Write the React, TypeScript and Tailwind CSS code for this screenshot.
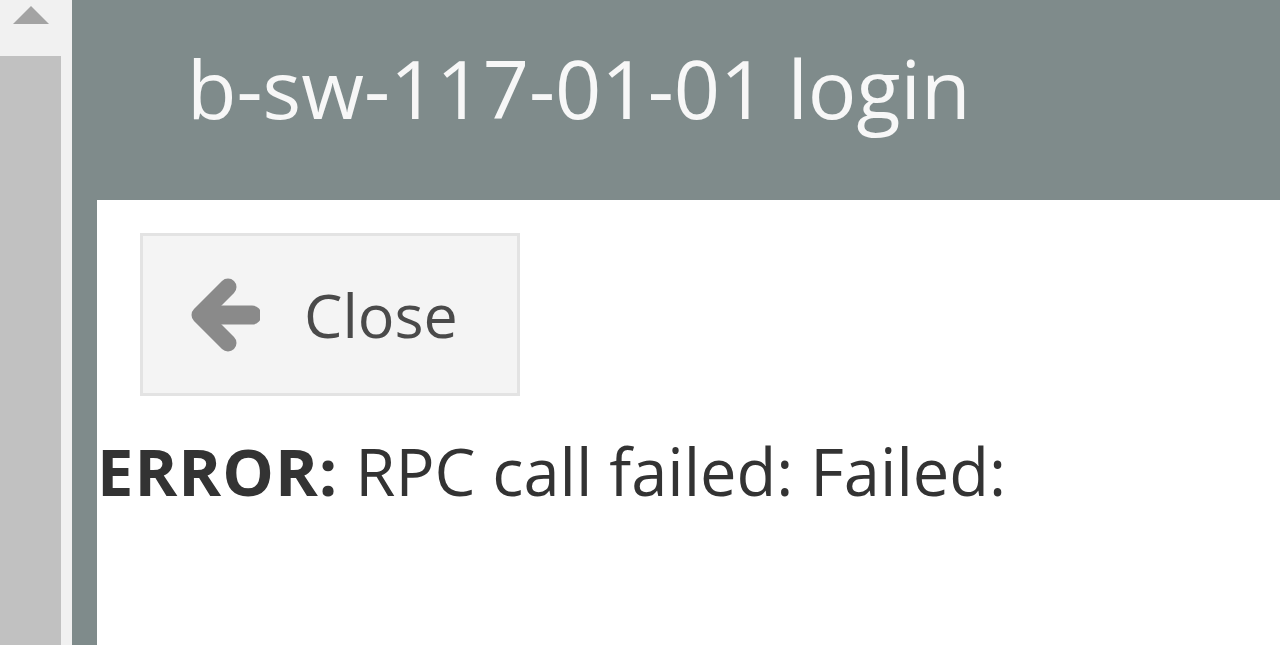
export default function App() {
  return (
    <div className="flex h-[645px] w-[1280px] overflow-hidden bg-white" style={{ fontFamily: '"Open Sans", sans-serif' }}>
      {/* scrollbar */}
      <div className="flex w-[72px] shrink-0 flex-col bg-[#f1f1f1]">
        <div className="flex h-[56px] w-[61px] justify-center pt-[5px]">
          <svg width="38" height="20" viewBox="0 0 38 20">
            <polygon points="19,1 37,19 1,19" fill="#a3a3a3" />
          </svg>
        </div>
        <div className="w-[61px] flex-1 bg-[#c1c1c1]" />
      </div>

      {/* panel */}
      <div className="flex flex-1 flex-col bg-[#7f8b8b]">
        <div className="flex h-[200px] shrink-0 items-start pl-[115px] pt-[47px]">
          <h1 className="text-[81px] font-normal leading-none text-[#f7f7f7]">b-sw-117-01-01 login</h1>
        </div>
        <div className="ml-[25px] flex-1 bg-white pl-[43px] pt-[33px]">
          <button className="flex h-[163px] w-[380px] items-center border-[3px] border-[#e3e3e3] bg-[#f4f4f4] pl-[45px]">
            <svg width="72" height="76" viewBox="0 0 72 76">
              <polyline points="40,10 12,38 40,66" fill="none" stroke="#8a8a8a" strokeWidth="17" strokeLinejoin="round" strokeLinecap="round" />
              <line x1="16" y1="38" x2="64" y2="38" stroke="#8a8a8a" strokeWidth="19" strokeLinecap="round" />
            </svg>
            <span className="ml-[44px] text-[61px] leading-none text-[#4a4a4a]">Close</span>
          </button>
          <p className="-ml-[43px] mt-[43px] whitespace-nowrap text-[65px] leading-none text-[#333]">
            <span className="font-bold tracking-[1px]">ERROR:</span> RPC call failed: Failed:
          </p>
        </div>
      </div>
    </div>
  );
}
